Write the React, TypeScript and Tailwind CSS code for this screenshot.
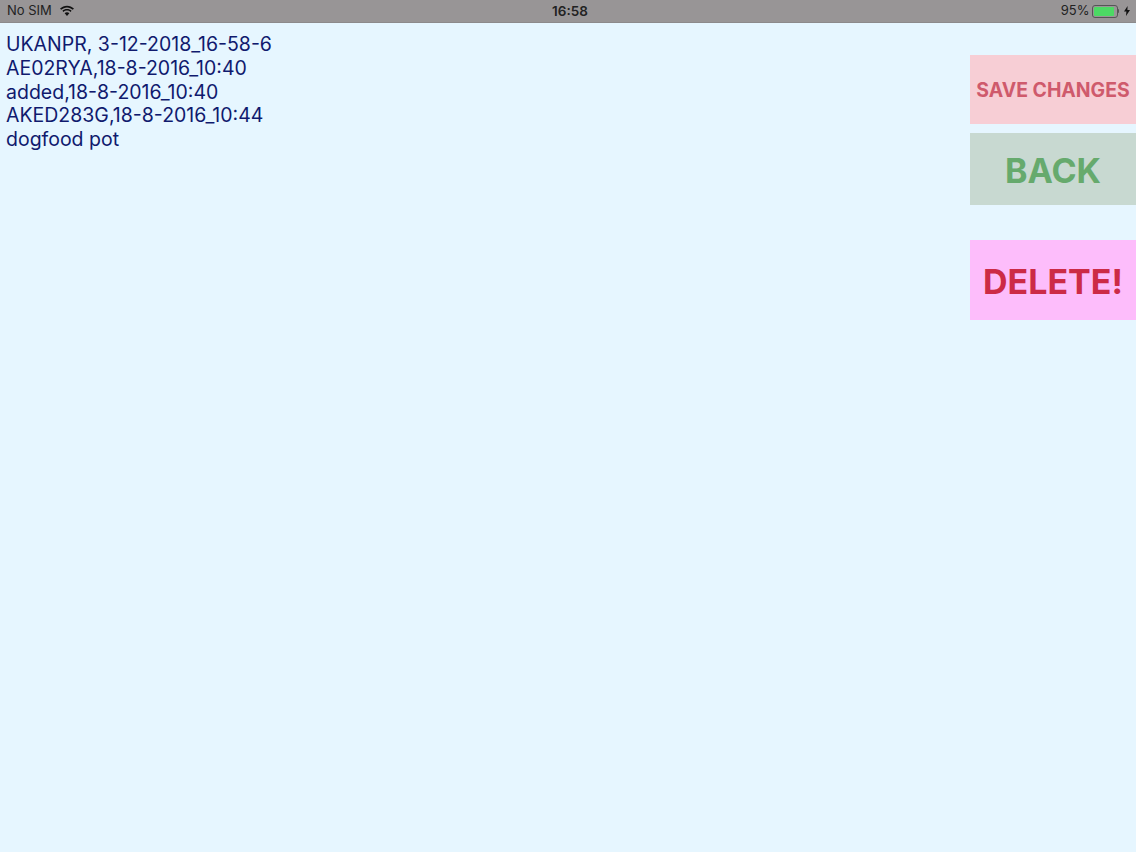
export default function App() {
  return (
    <div className="w-[1136px] h-[852px] bg-[#e6f6ff] overflow-hidden font-['Inter',sans-serif] flex flex-col">
      <div className="h-[23px] bg-[#989596] border-b border-[#8c8a8b] flex items-center justify-between pl-[7px] pr-[6px] text-[13px] text-[#222] font-['Inter',sans-serif]">
        <div className="flex items-center gap-[7px] w-[200px]">
          <span>No SIM</span>
          <svg width="16" height="12" viewBox="0 0 17 12" fill="#111">
            <path d="M8.5 2.2c2.4 0 4.6 1 6.2 2.5l1.2-1.3C13.9 1.5 11.3.4 8.5.4S3.1 1.5 1.1 3.4l1.2 1.3C3.9 3.2 6.1 2.2 8.5 2.2z" />
            <path d="M8.5 5.6c1.4 0 2.7.5 3.7 1.5l1.2-1.3C12.1 4.5 10.4 3.8 8.5 3.8s-3.6.7-4.9 2l1.2 1.3c1-1 2.3-1.5 3.7-1.5z" />
            <path d="M8.5 7.4c-1 0-1.8.4-2.5 1l2.5 2.8L11 8.4c-.7-.6-1.5-1-2.5-1z" />
          </svg>
        </div>
        <span className="font-semibold text-[13.5px] ml-[3px]">16:58</span>
        <div className="flex items-center justify-end w-[200px]">
          <span>95%</span>
          <div className="ml-[2px] w-[26px] h-[13px] border border-[#555] rounded-[3px] p-[1px]">
            <div className="w-[95%] h-full bg-[#4cd964] rounded-[1px]" />
          </div>
          <div className="w-[1.5px] h-[4px] bg-[#555] rounded-r-sm" />
          <svg className="ml-[5px]" width="6" height="10" viewBox="0 0 6 10" fill="#111">
            <path d="M3.6 0 0 5.6h2.4L2 10l4-6H3.4z" />
          </svg>
        </div>
      </div>
      <div className="flex-1 flex justify-between">
        <div className="pt-[10px] pl-[6px] text-[19.5px] leading-[23.75px] text-[#101a6e]">
          <p>UKANPR, 3-12-2018_16-58-6</p>
          <p>AE02RYA,18-8-2016_10:40</p>
          <p>added,18-8-2016_10:40</p>
          <p>AKED283G,18-8-2016_10:44</p>
          <p>dogfood pot</p>
        </div>
        <div className="w-[166px] pt-[32px] flex flex-col font-bold text-center">
          <div className="h-[69px] bg-[#f7ced5] text-[#cf5a6c] text-[19.4px] pt-[2px] flex items-center justify-center whitespace-nowrap">SAVE CHANGES</div>
          <div className="h-[72px] mt-[9px] bg-[#c8d9d1] text-[#66aa6d] text-[34px] pt-[2px] flex items-center justify-center">BACK</div>
          <div className="h-[80px] mt-[35px] bg-[#fdbdfb] text-[#cc2b46] text-[34px] pt-[2px] flex items-center justify-center">DELETE!</div>
        </div>
      </div>
    </div>
  );
}
